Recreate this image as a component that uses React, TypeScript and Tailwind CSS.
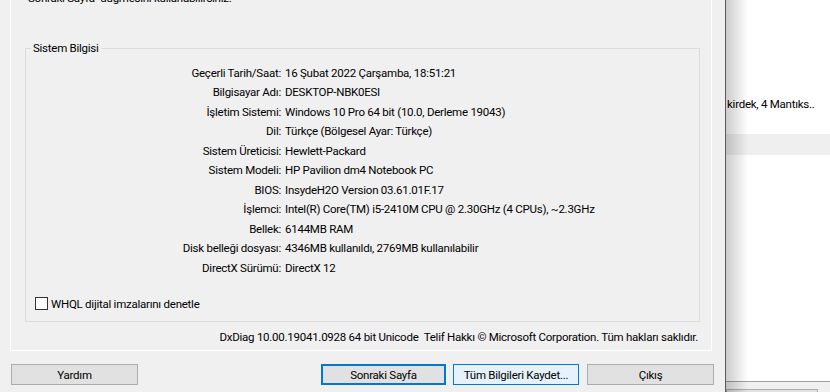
import React from "react";

const rows: [string, string][] = [
  ["Geçerli Tarih/Saat:", "16 Şubat 2022 Çarşamba, 18:51:21"],
  ["Bilgisayar Adı:", "DESKTOP-NBK0ESI"],
  ["İşletim Sistemi:", "Windows 10 Pro 64 bit (10.0, Derleme 19043)"],
  ["Dil:", "Türkçe (Bölgesel Ayar: Türkçe)"],
  ["Sistem Üreticisi:", "Hewlett-Packard"],
  ["Sistem Modeli:", "HP Pavilion dm4 Notebook PC"],
  ["BIOS:", "InsydeH2O Version 03.61.01F.17"],
  ["İşlemci:", "Intel(R) Core(TM) i5-2410M CPU @ 2.30GHz (4 CPUs), ~2.3GHz"],
  ["Bellek:", "6144MB RAM"],
  ["Disk belleği dosyası:", "4346MB kullanıldı, 2769MB kullanılabilir"],
  ["DirectX Sürümü:", "DirectX 12"],
];

export default function App() {
  return (
    <div
      className="w-[830px] h-[392px] overflow-hidden flex text-[11.5px] tracking-[-0.25px] leading-[16px] text-black"
      style={{ fontFamily: 'Roboto, "Noto Sans", sans-serif' }}
    >
      {/* Dialog */}
      <div className="w-[725px] h-full bg-[#f0f0f0] flex flex-col shrink-0">
        <div className="ml-[10px] w-[702px] h-[351px] border-x border-b border-white flex flex-col">
          <div className="h-[8px] overflow-hidden">
            <div className="-mt-[10px] pl-[17px] whitespace-nowrap">
              Sonraki Sayfa" düğmesini kullanabilirsiniz.
            </div>
          </div>
          <div className="relative mt-[40px] ml-[14px] w-[675px] h-[274px] border border-[#dcdcdc] flex flex-col">
            <span className="absolute -top-[9px] left-[5px] px-[2px] bg-[#f0f0f0]">Sistem Bilgisi</span>
            <div className="pt-[14px] flex flex-col">
              {rows.map(([k, v]) => (
                <div key={k} className="flex h-[19.5px] items-center whitespace-nowrap">
                  <div className="w-[255px] text-right">{k}</div>
                  <div className="pl-[4px]">{v}</div>
                </div>
              ))}
            </div>
            <div className="mt-[18px] ml-[9px] flex items-center">
              <div className="w-[13px] h-[13px] border border-[#333333] bg-white" />
              <span className="ml-[3px]">WHQL dijital imzalarını denetle</span>
            </div>
          </div>
          <div className="mt-[7px] pr-[13px] text-right whitespace-nowrap">
            DxDiag 10.00.19041.0928 64 bit Unicode&nbsp;&nbsp;Telif Hakkı © Microsoft Corporation. Tüm hakları saklıdır.
          </div>
        </div>
        <div className="mt-[13px] flex">
          <div className="ml-[11px] w-[127px] h-[21px] border border-[#adadad] bg-[#e1e1e1] flex items-center justify-center">
            Yardım
          </div>
          <div className="ml-[183px] w-[125px] h-[21px] border-2 border-[#0078d7] bg-[#e1e1e1] flex items-center justify-center">
            Sonraki Sayfa
          </div>
          <div className="ml-[7px] w-[126px] h-[21px] border border-[#0078d7] bg-[#e5f1fb] flex items-center justify-center">
            Tüm Bilgileri Kaydet...
          </div>
          <div className="ml-[8px] w-[127px] h-[21px] border border-[#adadad] bg-[#e1e1e1] flex items-center justify-center">
            Çıkış
          </div>
        </div>
      </div>

      {/* Background window */}
      <div className="relative flex-1 h-full bg-white border-l border-[#5a5a5a] flex flex-col">
        <div className="mt-[96px] pl-[1px] whitespace-nowrap overflow-hidden">kirdek, 4 Mantıks..</div>
        <div className="mt-[22px] h-[21px] bg-[#efefef]" />
        <div className="flex-1" />
        <div className="h-[11px] border-t border-[#a0a0a0] bg-[#f0f0f0]">
          <div className="mt-[7px] w-[92px] h-[10px] border border-[#adadad] bg-[#e1e1e1]" />
        </div>
        <div className="absolute left-0 top-0 bottom-0 w-[22px] bg-gradient-to-r from-black/20 to-transparent" />
      </div>
    </div>
  );
}
